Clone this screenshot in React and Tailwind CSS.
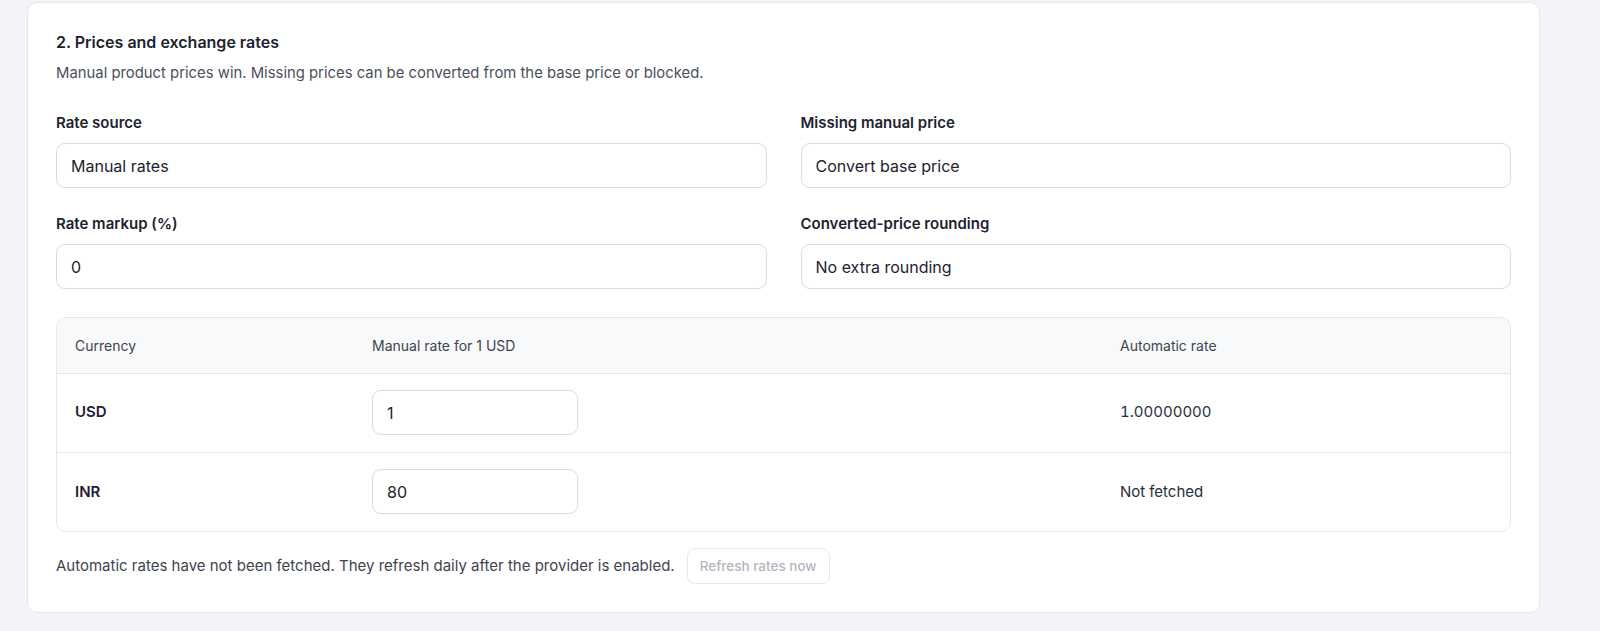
import React from "react";

const font = { fontFamily: "Inter, 'Noto Sans', sans-serif" };

function Field({ label, value }) {
  return (
    <div className="flex flex-col">
      <label className="text-[15px] font-semibold text-[#1e2230] leading-[20px]">{label}</label>
      <div className="mt-[10px] h-[45px] rounded-[9px] border border-[#d9dbe1] bg-white px-[14px] flex items-center text-[16px] text-[#1e2230]">
        {value}
      </div>
    </div>
  );
}

const rows = [
  { code: "USD", manual: "1", auto: "1.00000000" },
  { code: "INR", manual: "80", auto: "Not fetched" },
];

export default function App() {
  return (
    <div className="min-h-[631px] w-full bg-[#f3f4fa] pt-[2px] pl-[27px] pr-[60px]" style={font}>
      <div className="rounded-[10px] border border-[#e6e7ee] bg-white px-[28px] pt-[28px] pb-[28px]">
        <h2 className="text-[16px] font-semibold text-[#1e2230] leading-[22px]">2. Prices and exchange rates</h2>
        <p className="mt-[10px] text-[14.85px] text-[#4a4f5c] leading-[20px]">
          Manual product prices win. Missing prices can be converted from the base price or blocked.
        </p>

        <div className="mt-[30px] grid grid-cols-2 gap-x-[34px] gap-y-[26px]">
          <Field label="Rate source" value="Manual rates" />
          <Field label="Missing manual price" value="Convert base price" />
          <Field label="Rate markup (%)" value="0" />
          <Field label="Converted-price rounding" value="No extra rounding" />
        </div>

        <div className="mt-[28px] overflow-hidden rounded-[10px] border border-[#e6e7ec]">
          <table className="w-full border-collapse text-left">
            <thead>
              <tr className="bg-[#f8f9fa] h-[55px]">
                <th className="w-[297px] px-[18px] text-[14px] font-normal text-[#3f4350]">Currency</th>
                <th className="w-[748px] px-[18px] text-[14px] font-normal text-[#3f4350]">Manual rate for 1 USD</th>
                <th className="px-[18px] text-[14px] font-normal text-[#3f4350]">Automatic rate</th>
              </tr>
            </thead>
            <tbody>
              {rows.map((r) => (
                <tr key={r.code} className="h-[79px] border-t border-[#e6e7ec]">
                  <td className="px-[18px] text-[15px] font-semibold text-[#1e2230]">{r.code}</td>
                  <td className="px-[18px]">
                    <div className="w-[206px] h-[45px] rounded-[9px] border border-[#d9dbe1] px-[14px] flex items-center text-[16px] text-[#1e2230]">
                      {r.manual}
                    </div>
                  </td>
                  <td className="px-[18px] text-[15px] tabular-nums text-[#2a2e3a]">{r.auto}</td>
                </tr>
              ))}
            </tbody>
          </table>
        </div>

        <div className="mt-[16px] flex items-center gap-[12px]">
          <span className="text-[15px] text-[#3f4350]">
            Automatic rates have not been fetched. They refresh daily after the provider is enabled.
          </span>
          <button
            disabled
            className="h-[36px] rounded-[8px] border border-[#e6e7ec] bg-white px-[12px] text-[13.5px] font-medium text-[#b3b6bd]"
          >
            Refresh rates now
          </button>
        </div>
      </div>
    </div>
  );
}
